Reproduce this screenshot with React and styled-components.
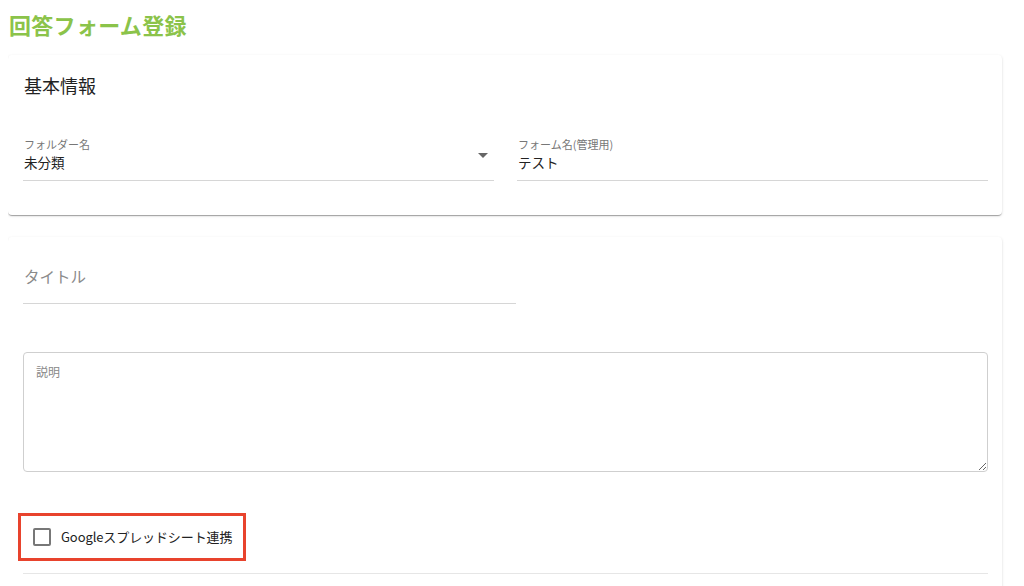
import React from "react";
import styled, { createGlobalStyle } from "styled-components";

const Global = createGlobalStyle`
  html, body { background: #ffffff; }
  body {
    margin: 8px;
    font-family: "Noto Sans CJK JP", "Noto Sans", sans-serif;
    color: #222;
  }
  * { box-sizing: border-box; }
`;

const Page = styled.main`
  width: 994px;
`;

const PageTitle = styled.h1`
  margin: 0 0 15px 0;
  padding-left: 1px;
  font-size: 22px;
  line-height: 32px;
  font-weight: 700;
  color: #8bc34a;
  letter-spacing: 0.3px;
`;

const Card = styled.section`
  background: #fff;
  border-radius: 4px;
  box-shadow: 0 2px 1px -1px rgba(0,0,0,0.2), 0 1px 1px 0 rgba(0,0,0,0.14), 0 1px 3px 0 rgba(0,0,0,0.12);
  padding: ${p => p.$pad};
  margin-bottom: 22px;
`;

const CardHeading = styled.h2`
  margin: 0 0 0 1px;
  font-size: 18px;
  line-height: 28px;
  font-weight: 400;
  color: #222;
`;

const FieldRow = styled.div`
  display: grid;
  grid-template-columns: 1fr 1fr;
  column-gap: 23px;
  margin-top: 37px;
`;

const Field = styled.div`
  position: relative;
  display: flex;
  flex-direction: column;
  border-bottom: 1px solid #d6d6d6;
`;

const Label = styled.label`
  font-size: 11px;
  line-height: 16px;
  color: #777;
  padding-left: 1px;
`;

const ValueInput = styled.input`
  border: none;
  outline: none;
  padding: 0 0 8px 1px;
  margin: 0;
  font: inherit;
  font-size: 13.5px;
  line-height: 20px;
  height: 28px;
  color: #222;
  background: transparent;
`;

const Arrow = styled.span`
  position: absolute;
  right: 6px;
  top: 17px;
  width: 0;
  height: 0;
  border-left: 5px solid transparent;
  border-right: 5px solid transparent;
  border-top: 5px solid #666;
`;

const TitleField = styled.div`
  width: 493px;
  border-bottom: 1px solid #d6d6d6;
  padding: 11px 0 15px 0;
`;

const TitleInput = styled.input`
  border: none;
  outline: none;
  width: 100%;
  padding: 0 0 0 1px;
  font: inherit;
  font-size: 15.5px;
  line-height: 20px;
  height: 20px;
  color: #222;
  background: transparent;
  &::placeholder { color: #8a8a8a; }
`;

const Description = styled.textarea`
  display: block;
  width: 100%;
  height: 120px;
  margin-top: 48px;
  border: 1px solid #cfcfcf;
  border-radius: 4px;
  padding: 10px 12px;
  font: inherit;
  font-size: 12px;
  line-height: 18px;
  outline: none;
  resize: vertical;
  &::placeholder { color: #888; }
`;

const Highlight = styled.div`
  display: inline-flex;
  align-items: center;
  gap: 10px;
  height: 48px;
  margin: 41px 0 0 -5px;
  padding: 0 11px 0 12px;
  border: 3px solid #e8432d;
`;

const Box = styled.span`
  width: 18px;
  height: 18px;
  border: 2px solid #777;
  border-radius: 2px;
  flex: none;
`;

const CheckText = styled.span`
  font-size: 13px;
  line-height: 20px;
  color: #222;
  letter-spacing: -0.1px;
`;

const Divider = styled.div`
  height: 1px;
  background: #e6e6e6;
  margin-top: 12px;
`;

export default function App() {
  return (
    <Page>
      <Global />
      <PageTitle>回答フォーム登録</PageTitle>
      <Card $pad="16px 14px 34px 15px">
        <CardHeading>基本情報</CardHeading>
        <FieldRow>
          <Field>
            <Label>フォルダー名</Label>
            <ValueInput readOnly defaultValue="未分類" />
            <Arrow />
          </Field>
          <Field>
            <Label>フォーム名(管理用)</Label>
            <ValueInput readOnly defaultValue="テスト" />
          </Field>
        </FieldRow>
      </Card>
      <Card $pad="16px 14px 40px 15px">
        <TitleField>
          <TitleInput placeholder="タイトル" />
        </TitleField>
        <Description placeholder="説明" />
        <Highlight>
          <Box />
          <CheckText>Googleスプレッドシート連携</CheckText>
        </Highlight>
        <Divider />
      </Card>
    </Page>
  );
}
